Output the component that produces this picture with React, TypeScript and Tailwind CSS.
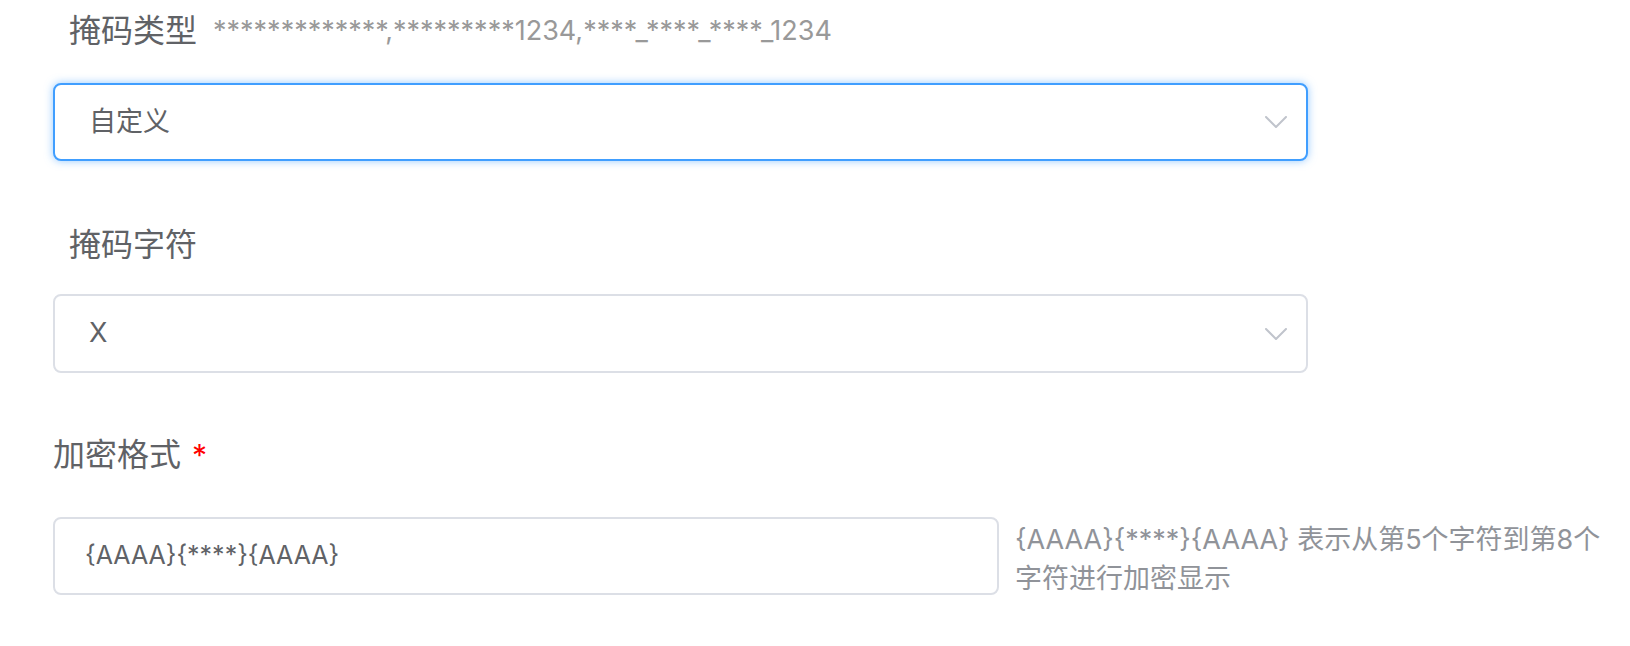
// 脱敏规则配置表单
const font = "font-['Inter','Noto_Sans_CJK_SC',sans-serif]";

function Chevron() {
  return (
    <svg width="22" height="12" viewBox="0 0 22 12" fill="none" className="shrink-0">
      <path d="M1 1l10 10L21 1" stroke="#c0c4cc" strokeWidth="2" strokeLinecap="round" strokeLinejoin="round" />
    </svg>
  );
}

function Select({ value, focused }: { value: string; focused?: boolean }) {
  return (
    <div
      className={`flex w-[1255px] items-center justify-between rounded-[8px] border-2 bg-white pl-[34px] pr-[19px] ${
        focused
          ? "h-[78px] border-[#409eff] shadow-[0_0_8px_rgba(64,158,255,0.55)]"
          : "h-[79px] border-[#dcdfe6]"
      }`}
    >
      <span className="text-[27px] text-[#606266]">{value}</span>
      <Chevron />
    </div>
  );
}

export default function App() {
  return (
    <div className={`min-h-screen bg-white pl-[53px] ${font}`}>
      {/* 掩码类型 */}
      <div className="flex h-[62px] items-center gap-[16px] pl-[16px]">
        <span className="text-[32px] text-[#606266]">掩码类型</span>
        <span className="text-[27px] text-[#999999]">*************,*********1234,****_****_****_1234</span>
      </div>
      <div className="mt-[21px]">
        <Select value="自定义" focused />
      </div>

      {/* 掩码字符 */}
      <div className="mt-[53px] flex h-[62px] items-center pl-[16px]">
        <span className="text-[32px] text-[#606266]">掩码字符</span>
      </div>
      <div className="mt-[18px]">
        <Select value="X" />
      </div>

      {/* 加密格式 */}
      <div className="mt-[51px] flex h-[62px] items-center gap-[11px]">
        <span className="text-[32px] text-[#606266]">加密格式</span>
        <span className="text-[30px] text-[#ff0000]">*</span>
      </div>
      <div className="mt-[31px] flex items-start gap-[16px]">
        <div className="flex h-[78px] w-[946px] items-center rounded-[8px] border-2 border-[#dcdfe6] bg-white pl-[30px]">
          <span className="text-[25px] text-[#606266]">{"{AAAA}{****}{AAAA}"}</span>
        </div>
        <p className="mt-[3px] whitespace-nowrap text-[27px] leading-[39px] text-[#909399]">
          {"{AAAA}{****}{AAAA} 表示从第5个字符到第8个"}
          <br />
          字符进行加密显示
        </p>
      </div>
    </div>
  );
}
